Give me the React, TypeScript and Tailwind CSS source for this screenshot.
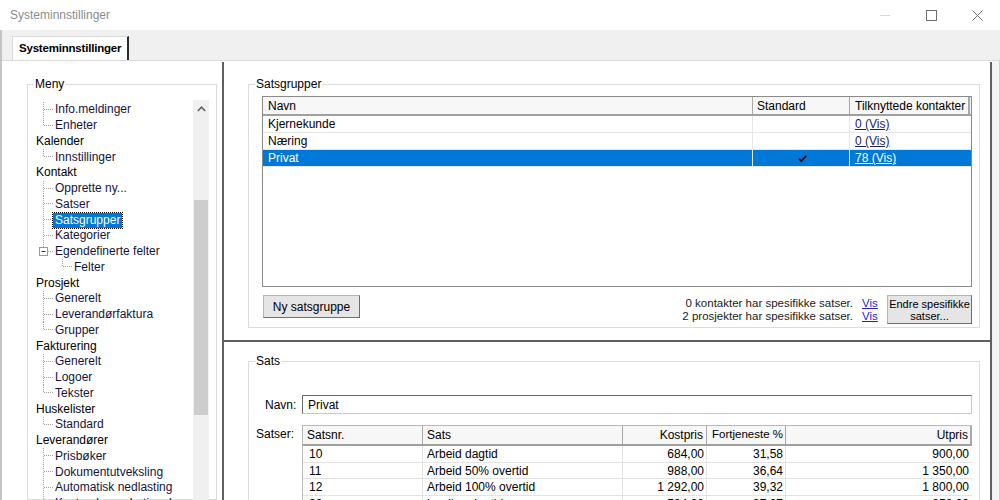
import React from "react";

type Node = { label: string; level: 0 | 1 | 2; last?: boolean; selected?: boolean; box?: boolean };

const tree: Node[] = [
  { label: "Info.meldinger", level: 1 },
  { label: "Enheter", level: 1, last: true },
  { label: "Kalender", level: 0 },
  { label: "Innstillinger", level: 1, last: true },
  { label: "Kontakt", level: 0 },
  { label: "Opprette ny...", level: 1 },
  { label: "Satser", level: 1 },
  { label: "Satsgrupper", level: 1, selected: true },
  { label: "Kategorier", level: 1 },
  { label: "Egendefinerte felter", level: 1, last: true, box: true },
  { label: "Felter", level: 2, last: true },
  { label: "Prosjekt", level: 0 },
  { label: "Generelt", level: 1 },
  { label: "Leverandørfaktura", level: 1 },
  { label: "Grupper", level: 1, last: true },
  { label: "Fakturering", level: 0 },
  { label: "Generelt", level: 1 },
  { label: "Logoer", level: 1 },
  { label: "Tekster", level: 1, last: true },
  { label: "Huskelister", level: 0 },
  { label: "Standard", level: 1, last: true },
  { label: "Leverandører", level: 0 },
  { label: "Prisbøker", level: 1 },
  { label: "Dokumentutveksling", level: 1 },
  { label: "Automatisk nedlasting", level: 1 },
  { label: "Kostnader og betingelser", level: 1 },
];

function Connector({ last, box }: { last?: boolean; box?: boolean }) {
  if (box) {
    return (
      <svg width="19" height="16" viewBox="0 0 19 16" className="shrink-0">
        <line x1="9.5" y1="0" x2="9.5" y2="3.5" stroke="#a0a0a0" strokeDasharray="1 1" />
        <rect x="5.5" y="3.5" width="8" height="8" fill="#fff" stroke="#9a9a9a" />
        <line x1="7.5" y1="7.5" x2="11.5" y2="7.5" stroke="#333" />
        <line x1="14" y1="7.5" x2="19" y2="7.5" stroke="#a0a0a0" strokeDasharray="1 1" />
      </svg>
    );
  }
  return (
    <svg width="19" height="16" viewBox="0 0 19 16" className="shrink-0">
      <line x1="9.5" y1="0" x2="9.5" y2={last ? 8 : 16} stroke="#a0a0a0" strokeDasharray="1 1" />
      <line x1="10" y1="7.5" x2="19" y2="7.5" stroke="#a0a0a0" strokeDasharray="1 1" />
    </svg>
  );
}

function TreeRow({ n }: { n: Node }) {
  return (
    <div className="flex h-[15.75px] items-center pl-[6px] whitespace-nowrap">
      {n.level === 2 && <div className="w-[19px] shrink-0" />}
      {n.level >= 1 && <Connector last={n.last} box={n.box} />}
      <span
        className={
          n.selected
            ? "bg-[#0078d7] px-[2px] leading-[15px] text-white outline outline-1 outline-dotted outline-[#000]"
            : n.level === 0
            ? "px-[2px] leading-[15px] text-[#000]"
            : "px-[2px] leading-[15px] text-[#14143c]"
        }
      >
        {n.label}
      </span>
    </div>
  );
}

function Check() {
  return (
    <svg width="9" height="7" viewBox="0 0 9 7">
      <path d="M0.8 3.6 L3.2 6 L8.2 0.8" fill="none" stroke="#000" strokeWidth="1.8" />
    </svg>
  );
}

const satsRows = [
  ["10", "Arbeid dagtid", "684,00", "31,58", "900,00"],
  ["11", "Arbeid 50% overtid", "988,00", "36,64", "1 350,00"],
  ["12", "Arbeid 100% overtid", "1 292,00", "39,32", "1 800,00"],
  ["20", "Lærling dagtid", "534,00", "37,07", "850,00"],
];

function Btn({ children, className }: { children: React.ReactNode; className: string }) {
  return (
    <div
      className={
        "flex items-center justify-center bg-[#e5e5e5] border border-[#b4b4b4] border-r-[#6e6e6e] border-b-[#6e6e6e] text-center " +
        className
      }
    >
      {children}
    </div>
  );
}

export default function App() {
  return (
    <div
      className="w-[1000px] h-[500px] overflow-hidden bg-white flex flex-col text-[12px] text-black"
      style={{ fontFamily: '"Liberation Sans", Arial, sans-serif' }}
    >
      {/* title bar */}
      <div className="h-[30px] shrink-0 flex items-center justify-between pl-[10px]">
        <span className="text-[#8c8c8c] text-[12px]">Systeminnstillinger</span>
        <div className="flex items-center h-full">
          <div className="w-[46px] flex justify-center">
            <svg width="10" height="10" viewBox="0 0 10 10">
              <line x1="0" y1="5.5" x2="10" y2="5.5" stroke="#d8d8d8" />
            </svg>
          </div>
          <div className="w-[46px] flex justify-center">
            <svg width="11" height="11" viewBox="0 0 11 11">
              <rect x="0.5" y="0.5" width="10" height="10" fill="none" stroke="#6f6f6f" />
            </svg>
          </div>
          <div className="w-[46px] flex justify-center">
            <svg width="11" height="11" viewBox="0 0 11 11">
              <path d="M0.5 0.5 L10.5 10.5 M10.5 0.5 L0.5 10.5" stroke="#6f6f6f" strokeWidth="1" />
            </svg>
          </div>
        </div>
      </div>

      {/* body */}
      <div className="flex-1 min-h-0 flex flex-col bg-[#f0f0f0] border-l-[2px] border-[#c4c4c4]">
        {/* tab strip */}
        <div className="h-[30px] shrink-0 flex items-end pl-[10px]">
          <div className="h-[24px] bg-white border-t border-l border-[#d9d9d9] border-r-[2px] border-r-[#2b2b2b] flex items-center px-[6px] font-bold text-[11.5px] tracking-[-0.2px]">
            Systeminnstillinger
          </div>
        </div>

        {/* tab page */}
        <div className="flex-1 min-h-0 flex bg-white border-t border-[#dcdcdc]">
          {/* left panel */}
          <div className="w-[220px] shrink-0 flex flex-col">
            <fieldset className="ml-[25px] mt-[16px] w-[190px] flex-1 border border-[#dcdcdc] min-h-0">
              <legend className="ml-[6px] px-[1px] leading-[14px]">Meny</legend>
              <div className="flex mt-[9px]">
                <div className="flex-1 flex flex-col pt-[2px]">
                  {tree.map((n, i) => (
                    <TreeRow key={i} n={n} />
                  ))}
                </div>
                <div className="w-[16px] mr-[7px] bg-[#f0f0f0] flex flex-col items-center">
                  <div className="h-[17px] flex items-center justify-center">
                    <svg width="9" height="6" viewBox="0 0 9 6">
                      <path d="M0.8 5 L4.5 1.2 L8.2 5" fill="none" stroke="#606060" strokeWidth="1.6" />
                    </svg>
                  </div>
                  <div className="mt-[83px] h-[215px] w-[14px] bg-[#cdcdcd]" />
                </div>
              </div>
            </fieldset>
          </div>

          {/* right panel */}
          <div className="flex-1 min-w-0 mt-[1px] flex flex-col border-l-[2px] border-r-[2px] border-[#5f5f5f] bg-white">
            {/* top section */}
            <div className="h-[280px] shrink-0 border-b-[2px] border-[#5f5f5f] flex flex-col">
              <fieldset className="ml-[24px] mt-[15px] w-[732px] h-[251px] border border-[#dcdcdc]">
                <legend className="ml-[6px] px-[1px] leading-[14px]">Satsgrupper</legend>
                <div className="ml-[13px] mt-[5px] w-[710px] h-[191px] border border-[#8a8a8a] flex flex-col">
                  <div className="h-[19px] shrink-0 flex border-b-[2px] border-[#a0a0a0] bg-[#f7f7f7]">
                    <div className="w-[490px] border-r border-[#a8a8a8] pl-[5px] flex items-center">Navn</div>
                    <div className="w-[97px] border-r border-[#a8a8a8] pl-[4px] flex items-center">Standard</div>
                    <div className="w-[120px] border-r-[2px] border-[#a8a8a8] pl-[5px] flex items-center whitespace-nowrap">
                      Tilknyttede kontakter
                    </div>
                  </div>
                  {[
                    { n: "Kjernekunde", v: "0 (Vis)" },
                    { n: "Næring", v: "0 (Vis)" },
                    { n: "Privat", v: "78 (Vis)", sel: true },
                  ].map((r) => (
                    <div
                      key={r.n}
                      className={
                        "h-[17px] flex border-b border-[#e6e6e6] " + (r.sel ? "bg-[#0078d7] text-white" : "")
                      }
                    >
                      <div className="w-[490px] border-r border-[#e6e6e6] pl-[5px] flex items-center">{r.n}</div>
                      <div className="w-[97px] border-r border-[#e6e6e6] flex items-center justify-center pl-[3px]">
                        {r.sel && <Check />}
                      </div>
                      <div className={"w-[120px] pl-[5px] flex items-center underline " + (r.sel ? "text-white" : "text-[#1e1e5a]")}>
                        {r.v}
                      </div>
                    </div>
                  ))}
                </div>
                <div className="ml-[13px] mt-[8px] w-[710px] flex items-start">
                  <Btn className="ml-[1px] w-[97px] h-[23px]">Ny satsgruppe</Btn>
                  <div className="flex-1 flex flex-col items-end leading-[13px] mt-[2px] text-[#1a1a1a] text-[11.5px]">
                    <div className="flex">
                      <span>0 kontakter har spesifikke satser.</span>
                      <span className="ml-[9px] w-[16px] text-[#1f1fd0] underline">Vis</span>
                    </div>
                    <div className="flex">
                      <span>2 prosjekter har spesifikke satser.</span>
                      <span className="ml-[9px] w-[16px] text-[#1f1fd0] underline">Vis</span>
                    </div>
                  </div>
                  <Btn className="ml-[9px] w-[85px] h-[29px] leading-[12px] flex-col text-[11px] whitespace-nowrap">
                    <span>Endre spesifikke</span>
                    <span>satser...</span>
                  </Btn>
                </div>
              </fieldset>
            </div>

            {/* bottom section */}
            <div className="flex-1 min-h-0 flex flex-col">
              <fieldset className="ml-[24px] mt-[12px] w-[732px] flex-1 border border-[#dcdcdc]">
                <legend className="ml-[6px] px-[1px] leading-[14px]">Sats</legend>
                <div className="mt-[27px] flex items-center">
                  <div className="w-[53px] pl-[16px]">Navn:</div>
                  <div className="w-[670px] h-[19px] border border-[#c8c8c8] border-t-[#6a6a6a] border-l-[#6a6a6a] pl-[5px] flex items-center">
                    Privat
                  </div>
                </div>
                <div className="mt-[11px] flex items-start">
                  <div className="w-[53px] pl-[7px] leading-[18px]">Satser:</div>
                  <div className="w-[670px] border-l border-t border-[#b8b8b8] flex flex-col">
                    <div className="h-[20px] grid grid-cols-[120px_200px_84px_79px_1fr] bg-[#f7f7f7] border-b-[2px] border-[#a0a0a0]">
                      <div className="border-r border-[#a8a8a8] pl-[4px] flex items-center">Satsnr.</div>
                      <div className="border-r border-[#a8a8a8] pl-[4px] flex items-center">Sats</div>
                      <div className="border-r border-[#a8a8a8] pr-[3px] flex items-center justify-end">Kostpris</div>
                      <div className="border-r border-[#a8a8a8] pr-[2px] flex items-center justify-end whitespace-nowrap text-[11.5px]">Fortjeneste %</div>
                      <div className="border-r-[2px] border-[#a8a8a8] pr-[2px] flex items-center justify-end">Utpris</div>
                    </div>
                    {satsRows.map((r) => (
                      <div
                        key={r[0]}
                        className="h-[16.7px] grid grid-cols-[120px_200px_84px_79px_1fr] border-b border-[#e3e3e3] leading-[16px]"
                      >
                        <div className="border-r border-[#e3e3e3] pl-[6px]">{r[0]}</div>
                        <div className="border-r border-[#e3e3e3] pl-[4px]">{r[1]}</div>
                        <div className="border-r border-[#e3e3e3] pr-[2px] text-right">{r[2]}</div>
                        <div className="border-r border-[#e3e3e3] pr-[2px] text-right">{r[3]}</div>
                        <div className="pr-[3px] text-right">{r[4]}</div>
                      </div>
                    ))}
                  </div>
                </div>
              </fieldset>
            </div>
          </div>

          {/* right strip */}
          <div className="w-[8px] shrink-0 bg-[#f4f4f4] border-r border-[#cfcfcf]" />
        </div>
      </div>
    </div>
  );
}
